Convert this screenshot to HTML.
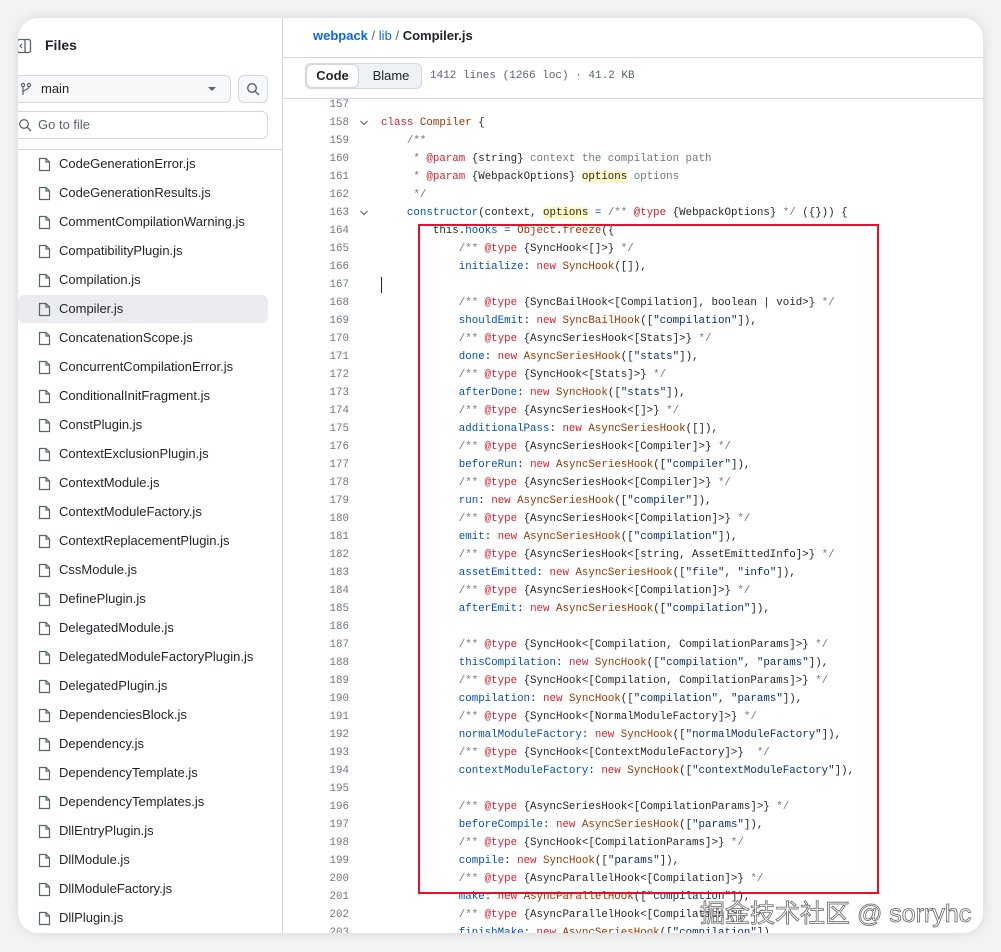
<!DOCTYPE html>
<html><head><meta charset="utf-8"><style>
*{box-sizing:border-box;margin:0;padding:0}
body{width:1001px;height:952px;background:#f3f3f3;position:relative;overflow:hidden;font-family:"Liberation Sans",sans-serif;color:#1f2328}
.card{position:absolute;left:18px;top:18px;width:965px;height:915px;background:#fff;border-radius:20px;overflow:hidden;box-shadow:0 0 12px rgba(0,0,0,.12)}
.side{position:absolute;left:0;top:0;width:265px;height:100%;border-right:1px solid #d0d7de}
.main{position:absolute;left:265px;top:0;right:0;height:100%}
.btn{position:absolute;border:1px solid #d0d7de;border-radius:6px;background:#f6f8fa}
.files{position:absolute;left:0;top:131px;width:265px;border-top:1px solid #d0d7de}
.f{position:absolute;left:0;width:250px;height:28px;font-size:13px;line-height:28px;padding-left:41px;border-radius:6px}
.f svg{position:absolute;left:20px;top:7px}
.f.sel{background:#eaecef}
.code{position:absolute;left:0;top:78px;font-family:"Liberation Mono",monospace;font-size:10.8px;white-space:pre}
.ln{position:absolute;left:0;width:66px;text-align:right;color:#6e7781;height:18px;line-height:18px}
.cl{position:absolute;left:98px;height:18px;line-height:18px;color:#1f2328}
.c{color:#6e7781}.k{color:#cf222e}.e{color:#953800}.p{color:#0550ae}.s{color:#0a3069}.t{color:#1f2328}.h{background:#fff8c5}
.chev{position:absolute;left:76px;width:10px;height:18px}
</style></head><body>
<div class="card">
<div class="side">
 <svg style="position:absolute;left:-2px;top:20px" width="16" height="16" viewBox="0 0 16 16"><rect x="1.5" y="1.5" width="13" height="13" rx="2" fill="none" stroke="#59636e" stroke-width="1.3"/><line x1="9" y1="2" x2="9" y2="14" stroke="#59636e" stroke-width="1.3"/><path d="M6 6l-2 2 2 2" fill="none" stroke="#59636e" stroke-width="1.2"/></svg>
 <div style="position:absolute;left:27px;top:19px;font-size:14px;font-weight:bold">Files</div>
 <div class="btn" style="left:-10px;top:57px;width:223px;height:28px"></div>
 <svg style="position:absolute;left:2px;top:64px" width="12" height="14" viewBox="0 0 12 14"><circle cx="3" cy="3" r="1.6" fill="none" stroke="#59636e" stroke-width="1.2"/><circle cx="9" cy="3" r="1.6" fill="none" stroke="#59636e" stroke-width="1.2"/><path d="M3 4.6V13M9 4.6c0 3-6 3-6 6" fill="none" stroke="#59636e" stroke-width="1.2"/></svg>
 <div style="position:absolute;left:23px;top:63px;font-size:13px">main</div>
 <div style="position:absolute;left:190px;top:69px;border:4px solid transparent;border-top:4px solid #59636e"></div>
 <div class="btn" style="left:220px;top:57px;width:30px;height:28px"></div>
 <svg style="position:absolute;left:228px;top:64px" width="14" height="14" viewBox="0 0 14 14"><circle cx="6" cy="6" r="4.3" fill="none" stroke="#59636e" stroke-width="1.4"/><path d="M9.2 9.2L13 13" stroke="#59636e" stroke-width="1.4"/></svg>
 <div class="btn" style="left:-10px;top:93px;width:260px;height:28px;background:#fff"></div>
 <svg style="position:absolute;left:0px;top:100px" width="14" height="14" viewBox="0 0 14 14"><circle cx="6" cy="6" r="4.3" fill="none" stroke="#59636e" stroke-width="1.3"/><path d="M9.2 9.2L13 13" stroke="#59636e" stroke-width="1.3"/></svg>
 <div style="position:absolute;left:20px;top:99px;font-size:13px;color:#59636e">Go to file</div>
 <div class="files" id="fl">
<div class="f" style="top:0px"><svg width="13" height="15" viewBox="0 0 13 15"><path d="M1.5 1.5h6.5l3.5 3.5v8.5h-10z" fill="none" stroke="#59636e" stroke-width="1.2"/><path d="M8 1.5V5h3.5" fill="none" stroke="#59636e" stroke-width="1.2"/></svg>CodeGenerationError.js</div>
<div class="f" style="top:29px"><svg width="13" height="15" viewBox="0 0 13 15"><path d="M1.5 1.5h6.5l3.5 3.5v8.5h-10z" fill="none" stroke="#59636e" stroke-width="1.2"/><path d="M8 1.5V5h3.5" fill="none" stroke="#59636e" stroke-width="1.2"/></svg>CodeGenerationResults.js</div>
<div class="f" style="top:58px"><svg width="13" height="15" viewBox="0 0 13 15"><path d="M1.5 1.5h6.5l3.5 3.5v8.5h-10z" fill="none" stroke="#59636e" stroke-width="1.2"/><path d="M8 1.5V5h3.5" fill="none" stroke="#59636e" stroke-width="1.2"/></svg>CommentCompilationWarning.js</div>
<div class="f" style="top:87px"><svg width="13" height="15" viewBox="0 0 13 15"><path d="M1.5 1.5h6.5l3.5 3.5v8.5h-10z" fill="none" stroke="#59636e" stroke-width="1.2"/><path d="M8 1.5V5h3.5" fill="none" stroke="#59636e" stroke-width="1.2"/></svg>CompatibilityPlugin.js</div>
<div class="f" style="top:116px"><svg width="13" height="15" viewBox="0 0 13 15"><path d="M1.5 1.5h6.5l3.5 3.5v8.5h-10z" fill="none" stroke="#59636e" stroke-width="1.2"/><path d="M8 1.5V5h3.5" fill="none" stroke="#59636e" stroke-width="1.2"/></svg>Compilation.js</div>
<div class="f sel" style="top:145px"><svg width="13" height="15" viewBox="0 0 13 15"><path d="M1.5 1.5h6.5l3.5 3.5v8.5h-10z" fill="none" stroke="#59636e" stroke-width="1.2"/><path d="M8 1.5V5h3.5" fill="none" stroke="#59636e" stroke-width="1.2"/></svg>Compiler.js</div>
<div class="f" style="top:174px"><svg width="13" height="15" viewBox="0 0 13 15"><path d="M1.5 1.5h6.5l3.5 3.5v8.5h-10z" fill="none" stroke="#59636e" stroke-width="1.2"/><path d="M8 1.5V5h3.5" fill="none" stroke="#59636e" stroke-width="1.2"/></svg>ConcatenationScope.js</div>
<div class="f" style="top:203px"><svg width="13" height="15" viewBox="0 0 13 15"><path d="M1.5 1.5h6.5l3.5 3.5v8.5h-10z" fill="none" stroke="#59636e" stroke-width="1.2"/><path d="M8 1.5V5h3.5" fill="none" stroke="#59636e" stroke-width="1.2"/></svg>ConcurrentCompilationError.js</div>
<div class="f" style="top:232px"><svg width="13" height="15" viewBox="0 0 13 15"><path d="M1.5 1.5h6.5l3.5 3.5v8.5h-10z" fill="none" stroke="#59636e" stroke-width="1.2"/><path d="M8 1.5V5h3.5" fill="none" stroke="#59636e" stroke-width="1.2"/></svg>ConditionalInitFragment.js</div>
<div class="f" style="top:261px"><svg width="13" height="15" viewBox="0 0 13 15"><path d="M1.5 1.5h6.5l3.5 3.5v8.5h-10z" fill="none" stroke="#59636e" stroke-width="1.2"/><path d="M8 1.5V5h3.5" fill="none" stroke="#59636e" stroke-width="1.2"/></svg>ConstPlugin.js</div>
<div class="f" style="top:290px"><svg width="13" height="15" viewBox="0 0 13 15"><path d="M1.5 1.5h6.5l3.5 3.5v8.5h-10z" fill="none" stroke="#59636e" stroke-width="1.2"/><path d="M8 1.5V5h3.5" fill="none" stroke="#59636e" stroke-width="1.2"/></svg>ContextExclusionPlugin.js</div>
<div class="f" style="top:319px"><svg width="13" height="15" viewBox="0 0 13 15"><path d="M1.5 1.5h6.5l3.5 3.5v8.5h-10z" fill="none" stroke="#59636e" stroke-width="1.2"/><path d="M8 1.5V5h3.5" fill="none" stroke="#59636e" stroke-width="1.2"/></svg>ContextModule.js</div>
<div class="f" style="top:348px"><svg width="13" height="15" viewBox="0 0 13 15"><path d="M1.5 1.5h6.5l3.5 3.5v8.5h-10z" fill="none" stroke="#59636e" stroke-width="1.2"/><path d="M8 1.5V5h3.5" fill="none" stroke="#59636e" stroke-width="1.2"/></svg>ContextModuleFactory.js</div>
<div class="f" style="top:377px"><svg width="13" height="15" viewBox="0 0 13 15"><path d="M1.5 1.5h6.5l3.5 3.5v8.5h-10z" fill="none" stroke="#59636e" stroke-width="1.2"/><path d="M8 1.5V5h3.5" fill="none" stroke="#59636e" stroke-width="1.2"/></svg>ContextReplacementPlugin.js</div>
<div class="f" style="top:406px"><svg width="13" height="15" viewBox="0 0 13 15"><path d="M1.5 1.5h6.5l3.5 3.5v8.5h-10z" fill="none" stroke="#59636e" stroke-width="1.2"/><path d="M8 1.5V5h3.5" fill="none" stroke="#59636e" stroke-width="1.2"/></svg>CssModule.js</div>
<div class="f" style="top:435px"><svg width="13" height="15" viewBox="0 0 13 15"><path d="M1.5 1.5h6.5l3.5 3.5v8.5h-10z" fill="none" stroke="#59636e" stroke-width="1.2"/><path d="M8 1.5V5h3.5" fill="none" stroke="#59636e" stroke-width="1.2"/></svg>DefinePlugin.js</div>
<div class="f" style="top:464px"><svg width="13" height="15" viewBox="0 0 13 15"><path d="M1.5 1.5h6.5l3.5 3.5v8.5h-10z" fill="none" stroke="#59636e" stroke-width="1.2"/><path d="M8 1.5V5h3.5" fill="none" stroke="#59636e" stroke-width="1.2"/></svg>DelegatedModule.js</div>
<div class="f" style="top:493px"><svg width="13" height="15" viewBox="0 0 13 15"><path d="M1.5 1.5h6.5l3.5 3.5v8.5h-10z" fill="none" stroke="#59636e" stroke-width="1.2"/><path d="M8 1.5V5h3.5" fill="none" stroke="#59636e" stroke-width="1.2"/></svg>DelegatedModuleFactoryPlugin.js</div>
<div class="f" style="top:522px"><svg width="13" height="15" viewBox="0 0 13 15"><path d="M1.5 1.5h6.5l3.5 3.5v8.5h-10z" fill="none" stroke="#59636e" stroke-width="1.2"/><path d="M8 1.5V5h3.5" fill="none" stroke="#59636e" stroke-width="1.2"/></svg>DelegatedPlugin.js</div>
<div class="f" style="top:551px"><svg width="13" height="15" viewBox="0 0 13 15"><path d="M1.5 1.5h6.5l3.5 3.5v8.5h-10z" fill="none" stroke="#59636e" stroke-width="1.2"/><path d="M8 1.5V5h3.5" fill="none" stroke="#59636e" stroke-width="1.2"/></svg>DependenciesBlock.js</div>
<div class="f" style="top:580px"><svg width="13" height="15" viewBox="0 0 13 15"><path d="M1.5 1.5h6.5l3.5 3.5v8.5h-10z" fill="none" stroke="#59636e" stroke-width="1.2"/><path d="M8 1.5V5h3.5" fill="none" stroke="#59636e" stroke-width="1.2"/></svg>Dependency.js</div>
<div class="f" style="top:609px"><svg width="13" height="15" viewBox="0 0 13 15"><path d="M1.5 1.5h6.5l3.5 3.5v8.5h-10z" fill="none" stroke="#59636e" stroke-width="1.2"/><path d="M8 1.5V5h3.5" fill="none" stroke="#59636e" stroke-width="1.2"/></svg>DependencyTemplate.js</div>
<div class="f" style="top:638px"><svg width="13" height="15" viewBox="0 0 13 15"><path d="M1.5 1.5h6.5l3.5 3.5v8.5h-10z" fill="none" stroke="#59636e" stroke-width="1.2"/><path d="M8 1.5V5h3.5" fill="none" stroke="#59636e" stroke-width="1.2"/></svg>DependencyTemplates.js</div>
<div class="f" style="top:667px"><svg width="13" height="15" viewBox="0 0 13 15"><path d="M1.5 1.5h6.5l3.5 3.5v8.5h-10z" fill="none" stroke="#59636e" stroke-width="1.2"/><path d="M8 1.5V5h3.5" fill="none" stroke="#59636e" stroke-width="1.2"/></svg>DllEntryPlugin.js</div>
<div class="f" style="top:696px"><svg width="13" height="15" viewBox="0 0 13 15"><path d="M1.5 1.5h6.5l3.5 3.5v8.5h-10z" fill="none" stroke="#59636e" stroke-width="1.2"/><path d="M8 1.5V5h3.5" fill="none" stroke="#59636e" stroke-width="1.2"/></svg>DllModule.js</div>
<div class="f" style="top:725px"><svg width="13" height="15" viewBox="0 0 13 15"><path d="M1.5 1.5h6.5l3.5 3.5v8.5h-10z" fill="none" stroke="#59636e" stroke-width="1.2"/><path d="M8 1.5V5h3.5" fill="none" stroke="#59636e" stroke-width="1.2"/></svg>DllModuleFactory.js</div>
<div class="f" style="top:754px"><svg width="13" height="15" viewBox="0 0 13 15"><path d="M1.5 1.5h6.5l3.5 3.5v8.5h-10z" fill="none" stroke="#59636e" stroke-width="1.2"/><path d="M8 1.5V5h3.5" fill="none" stroke="#59636e" stroke-width="1.2"/></svg>DllPlugin.js</div>
 </div>
</div>
<div class="main">
 <div style="position:absolute;left:30px;top:10px;font-size:13px"><span style="color:#0969da;font-weight:bold">webpack</span> <span style="color:#59636e">/</span> <span style="color:#0969da">lib</span> <span style="color:#59636e">/</span> <b>Compiler.js</b></div>
 <div style="position:absolute;left:0;right:0;top:39px;border-top:1px solid #d0d7de"></div>
 <div style="position:absolute;left:22px;top:45px;width:117px;height:26px;background:#eff2f5;border:1px solid #d0d7de;border-radius:6px"></div>
 <div style="position:absolute;left:23px;top:46px;width:53px;height:24px;background:#fff;border:1px solid #d0d7de;border-radius:6px;font-size:13px;font-weight:bold;text-align:center;line-height:22px">Code</div>
 <div style="position:absolute;left:78px;top:46px;width:60px;height:24px;font-size:13px;text-align:center;line-height:24px">Blame</div>
 <div style="position:absolute;left:147px;top:52px;font-family:'Liberation Mono',monospace;font-size:11px;color:#59636e">1412 lines (1266 loc) · 41.2 KB</div>
 <div style="position:absolute;left:0;right:0;top:80px;border-top:1px solid #d0d7de"></div>
 <div class="code">
<div class="ln" style="top:0">157</div>
<div class="ln" style="top:18px">158</div><svg class="chev" style="top:18px" viewBox="0 0 10 18"><path d="M1.5 7l3.5 3.5L8.5 7" fill="none" stroke="#59636e" stroke-width="1.2"/></svg><div class="cl" style="top:18px"><span class="k">class</span> <span class="e">Compiler</span> {</div>
<div class="ln" style="top:36px">159</div><div class="cl c" style="top:36px">    /**</div>
<div class="ln" style="top:54px">160</div><div class="cl c" style="top:54px">     * <span class="k">@param</span> <span class="t">{string}</span> context the compilation path</div>
<div class="ln" style="top:72px">161</div><div class="cl c" style="top:72px">     * <span class="k">@param</span> <span class="t">{WebpackOptions}</span> <span class="t h">options</span> options</div>
<div class="ln" style="top:90px">162</div><div class="cl c" style="top:90px">     */</div>
<div class="ln" style="top:108px">163</div><svg class="chev" style="top:108px" viewBox="0 0 10 18"><path d="M1.5 7l3.5 3.5L8.5 7" fill="none" stroke="#59636e" stroke-width="1.2"/></svg><div class="cl" style="top:108px">    <span class="p">constructor</span>(context, <span class="h">options</span> <span class="p">=</span> <span class="c">/** <span class="k">@type</span> <span class="t">{WebpackOptions}</span> */</span> ({})) {</div>
<div class="ln" style="top:126px">164</div><div class="cl" style="top:126px">        this.<span class="p">hooks</span> <span class="p">=</span> <span class="e">Object</span>.<span class="e">freeze</span>({</div>
<div class="ln" style="top:144px">165</div><div class="cl c" style="top:144px">            /** <span class="k">@type</span> <span class="t">{SyncHook&lt;[]&gt;}</span> */</div>
<div class="ln" style="top:162px">166</div><div class="cl" style="top:162px">            <span class="p">initialize</span>: <span class="k">new</span> <span class="e">SyncHook</span>([]),</div>
<div class="ln" style="top:180px">167</div><div style="position:absolute;left:98px;top:181px;width:1px;height:16px;background:#1f2328"></div>
<div class="ln" style="top:198px">168</div><div class="cl c" style="top:198px">            /** <span class="k">@type</span> <span class="t">{SyncBailHook&lt;[Compilation], boolean | void&gt;}</span> */</div>
<div class="ln" style="top:216px">169</div><div class="cl" style="top:216px">            <span class="p">shouldEmit</span>: <span class="k">new</span> <span class="e">SyncBailHook</span>([<span class="s">"compilation"</span>]),</div>
<div class="ln" style="top:234px">170</div><div class="cl c" style="top:234px">            /** <span class="k">@type</span> <span class="t">{AsyncSeriesHook&lt;[Stats]&gt;}</span> */</div>
<div class="ln" style="top:252px">171</div><div class="cl" style="top:252px">            <span class="p">done</span>: <span class="k">new</span> <span class="e">AsyncSeriesHook</span>([<span class="s">"stats"</span>]),</div>
<div class="ln" style="top:270px">172</div><div class="cl c" style="top:270px">            /** <span class="k">@type</span> <span class="t">{SyncHook&lt;[Stats]&gt;}</span> */</div>
<div class="ln" style="top:288px">173</div><div class="cl" style="top:288px">            <span class="p">afterDone</span>: <span class="k">new</span> <span class="e">SyncHook</span>([<span class="s">"stats"</span>]),</div>
<div class="ln" style="top:306px">174</div><div class="cl c" style="top:306px">            /** <span class="k">@type</span> <span class="t">{AsyncSeriesHook&lt;[]&gt;}</span> */</div>
<div class="ln" style="top:324px">175</div><div class="cl" style="top:324px">            <span class="p">additionalPass</span>: <span class="k">new</span> <span class="e">AsyncSeriesHook</span>([]),</div>
<div class="ln" style="top:342px">176</div><div class="cl c" style="top:342px">            /** <span class="k">@type</span> <span class="t">{AsyncSeriesHook&lt;[Compiler]&gt;}</span> */</div>
<div class="ln" style="top:360px">177</div><div class="cl" style="top:360px">            <span class="p">beforeRun</span>: <span class="k">new</span> <span class="e">AsyncSeriesHook</span>([<span class="s">"compiler"</span>]),</div>
<div class="ln" style="top:378px">178</div><div class="cl c" style="top:378px">            /** <span class="k">@type</span> <span class="t">{AsyncSeriesHook&lt;[Compiler]&gt;}</span> */</div>
<div class="ln" style="top:396px">179</div><div class="cl" style="top:396px">            <span class="p">run</span>: <span class="k">new</span> <span class="e">AsyncSeriesHook</span>([<span class="s">"compiler"</span>]),</div>
<div class="ln" style="top:414px">180</div><div class="cl c" style="top:414px">            /** <span class="k">@type</span> <span class="t">{AsyncSeriesHook&lt;[Compilation]&gt;}</span> */</div>
<div class="ln" style="top:432px">181</div><div class="cl" style="top:432px">            <span class="p">emit</span>: <span class="k">new</span> <span class="e">AsyncSeriesHook</span>([<span class="s">"compilation"</span>]),</div>
<div class="ln" style="top:450px">182</div><div class="cl c" style="top:450px">            /** <span class="k">@type</span> <span class="t">{AsyncSeriesHook&lt;[string, AssetEmittedInfo]&gt;}</span> */</div>
<div class="ln" style="top:468px">183</div><div class="cl" style="top:468px">            <span class="p">assetEmitted</span>: <span class="k">new</span> <span class="e">AsyncSeriesHook</span>([<span class="s">"file"</span>, <span class="s">"info"</span>]),</div>
<div class="ln" style="top:486px">184</div><div class="cl c" style="top:486px">            /** <span class="k">@type</span> <span class="t">{AsyncSeriesHook&lt;[Compilation]&gt;}</span> */</div>
<div class="ln" style="top:504px">185</div><div class="cl" style="top:504px">            <span class="p">afterEmit</span>: <span class="k">new</span> <span class="e">AsyncSeriesHook</span>([<span class="s">"compilation"</span>]),</div>
<div class="ln" style="top:522px">186</div>
<div class="ln" style="top:540px">187</div><div class="cl c" style="top:540px">            /** <span class="k">@type</span> <span class="t">{SyncHook&lt;[Compilation, CompilationParams]&gt;}</span> */</div>
<div class="ln" style="top:558px">188</div><div class="cl" style="top:558px">            <span class="p">thisCompilation</span>: <span class="k">new</span> <span class="e">SyncHook</span>([<span class="s">"compilation"</span>, <span class="s">"params"</span>]),</div>
<div class="ln" style="top:576px">189</div><div class="cl c" style="top:576px">            /** <span class="k">@type</span> <span class="t">{SyncHook&lt;[Compilation, CompilationParams]&gt;}</span> */</div>
<div class="ln" style="top:594px">190</div><div class="cl" style="top:594px">            <span class="p">compilation</span>: <span class="k">new</span> <span class="e">SyncHook</span>([<span class="s">"compilation"</span>, <span class="s">"params"</span>]),</div>
<div class="ln" style="top:612px">191</div><div class="cl c" style="top:612px">            /** <span class="k">@type</span> <span class="t">{SyncHook&lt;[NormalModuleFactory]&gt;}</span> */</div>
<div class="ln" style="top:630px">192</div><div class="cl" style="top:630px">            <span class="p">normalModuleFactory</span>: <span class="k">new</span> <span class="e">SyncHook</span>([<span class="s">"normalModuleFactory"</span>]),</div>
<div class="ln" style="top:648px">193</div><div class="cl c" style="top:648px">            /** <span class="k">@type</span> <span class="t">{SyncHook&lt;[ContextModuleFactory]&gt;}</span>  */</div>
<div class="ln" style="top:666px">194</div><div class="cl" style="top:666px">            <span class="p">contextModuleFactory</span>: <span class="k">new</span> <span class="e">SyncHook</span>([<span class="s">"contextModuleFactory"</span>]),</div>
<div class="ln" style="top:684px">195</div>
<div class="ln" style="top:702px">196</div><div class="cl c" style="top:702px">            /** <span class="k">@type</span> <span class="t">{AsyncSeriesHook&lt;[CompilationParams]&gt;}</span> */</div>
<div class="ln" style="top:720px">197</div><div class="cl" style="top:720px">            <span class="p">beforeCompile</span>: <span class="k">new</span> <span class="e">AsyncSeriesHook</span>([<span class="s">"params"</span>]),</div>
<div class="ln" style="top:738px">198</div><div class="cl c" style="top:738px">            /** <span class="k">@type</span> <span class="t">{SyncHook&lt;[CompilationParams]&gt;}</span> */</div>
<div class="ln" style="top:756px">199</div><div class="cl" style="top:756px">            <span class="p">compile</span>: <span class="k">new</span> <span class="e">SyncHook</span>([<span class="s">"params"</span>]),</div>
<div class="ln" style="top:774px">200</div><div class="cl c" style="top:774px">            /** <span class="k">@type</span> <span class="t">{AsyncParallelHook&lt;[Compilation]&gt;}</span> */</div>
<div class="ln" style="top:792px">201</div><div class="cl" style="top:792px">            <span class="p">make</span>: <span class="k">new</span> <span class="e">AsyncParallelHook</span>([<span class="s">"compilation"</span>]),</div>
<div class="ln" style="top:810px">202</div><div class="cl c" style="top:810px">            /** <span class="k">@type</span> <span class="t">{AsyncParallelHook&lt;[Compilation]&gt;}</span> */</div>
<div class="ln" style="top:828px">203</div><div class="cl" style="top:828px">            <span class="p">finishMake</span>: <span class="k">new</span> <span class="e">AsyncSeriesHook</span>([<span class="s">"compilation"</span>]),</div>
 </div>
</div>
</div>
<div style="position:absolute;left:418px;top:224px;width:461px;height:670px;border:2px solid #e3112b"></div>
<div style="position:absolute;left:700px;top:894px;font-family:'Liberation Sans','Noto Sans CJK SC',sans-serif;font-size:25px;color:#fff;-webkit-text-stroke:0.8px #666;white-space:nowrap">掘金技术社区 @ sorryhc</div>
</body></html>
